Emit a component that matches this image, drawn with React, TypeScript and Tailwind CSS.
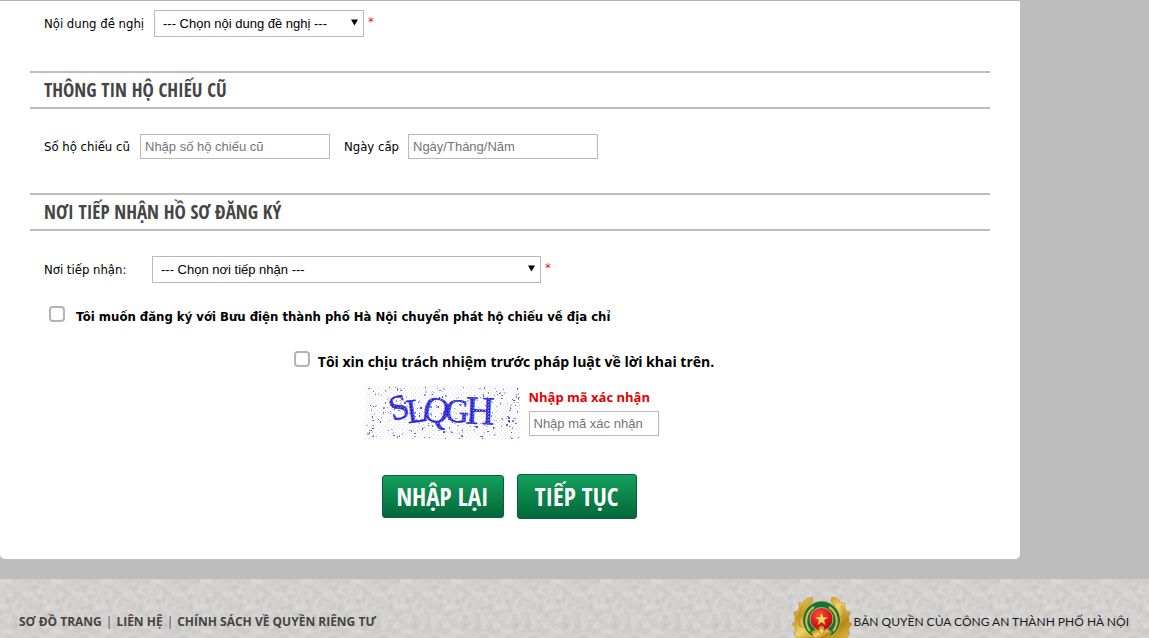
import React from "react";

const labelFont = "font-['DejaVu_Sans_Condensed','Noto_Sans',sans-serif] text-[13px]";
const fieldBox = "block border border-[#b9b9b9] bg-white font-['Liberation_Sans',sans-serif] text-[13px]";
const inputField = `${fieldBox} h-[25px] px-1 placeholder:text-[#757575]`;

function SectionTitle({ children }: { children: React.ReactNode }) {
  return (
    <h2 className="flex h-[38px] items-center border-y-2 border-[#bdbdbd] px-[14px] font-['Open_Sans_Condensed','Roboto_Condensed',sans-serif] text-[19px] font-bold text-[#454545]">
      {children}
    </h2>
  );
}

function SelectField({ id, text, width }: { id: string; text: string; width: string }) {
  return (
    <div className={`relative ${width}`}>
      <select id={id} className={`${fieldBox} h-[27px] w-full appearance-none pr-6 pl-2 text-black`}>
        <option>{text}</option>
      </select>
      <svg className="pointer-events-none absolute top-[9px] right-1.5 h-[7px] w-[7px]" viewBox="0 0 7 7" aria-hidden="true">
        <path d="M0 0.5H7L3.5 6.5Z" fill="#000" />
      </svg>
    </div>
  );
}

const checkbox =
  "h-4 w-4 shrink-0 appearance-none rounded-[4px] border-2 border-[#b3b3b3] bg-white checked:bg-[#0a8a4a]";

const specks = (() => {
  let seed = 4177;
  const next = () => {
    seed = (seed * 16807) % 2147483647;
    return seed / 2147483647;
  };
  return Array.from({ length: 300 }, () => ({
    x: Math.floor(next() * 153) + 1,
    y: Math.floor(next() * 52) + 1,
    w: next() > 0.65 ? 2 : 1,
    h: next() > 0.75 ? 2 : 1,
    o: 0.25 + next() * 0.6,
  }));
})();

const letters = [
  { c: "S", x: 34, y: 33, r: -16, s: 35 },
  { c: "L", x: 52, y: 36, r: -8, s: 34 },
  { c: "Q", x: 71, y: 36, r: 14, s: 36 },
  { c: "G", x: 92, y: 36, r: 4, s: 33 },
  { c: "H", x: 115, y: 38, r: 2, s: 40 },
];

function Captcha() {
  return (
    <svg width="155" height="54" viewBox="0 0 155 54" role="img" aria-label="SLQGH">
      <defs>
        <pattern id="screen" width="4" height="4" patternUnits="userSpaceOnUse">
          <rect width="4" height="4" fill="#fff" />
          <rect width="1" height="1" fill="#dcdcea" />
          <rect x="2" y="2" width="1" height="1" fill="#e2e2ee" />
        </pattern>
        <pattern id="ink" width="3" height="3" patternUnits="userSpaceOnUse">
          <rect width="3" height="3" fill="#2220d4" />
          <rect width="1" height="1" fill="#dddcf8" />
          <rect x="2" y="1" width="1" height="1" fill="#6866e2" />
        </pattern>
      </defs>
      <rect width="155" height="54" fill="url(#screen)" />
      {specks.map((d, i) => (
        <rect key={i} x={d.x} y={d.y} width={d.w} height={d.h} fill="#2c2bbf" opacity={d.o} />
      ))}
      <g fill="url(#ink)" className="font-['Liberation_Serif',serif]" stroke="#2220d4" strokeWidth="0.5" textAnchor="middle">
        {letters.map((l) => (
          <text key={l.c} x={l.x} y={l.y} fontSize={l.s} transform={`rotate(${l.r} ${l.x} ${l.y - 10})`}>
            {l.c}
          </text>
        ))}
      </g>
    </svg>
  );
}

function Emblem() {
  return (
    <svg className="h-[41px] w-[60px] shrink-0" viewBox="0 0 60 41" aria-hidden="true">
      <defs>
        <linearGradient id="gold" x1="0" y1="0" x2="1" y2="1">
          <stop offset="0" stopColor="#f3dc78" />
          <stop offset="0.3" stopColor="#c9971f" />
          <stop offset="0.5" stopColor="#f0d264" />
          <stop offset="0.75" stopColor="#b98516" />
          <stop offset="1" stopColor="#e6c04c" />
        </linearGradient>
        <radialGradient id="ruby" cx="0.4" cy="0.3" r="0.8">
          <stop offset="0" stopColor="#f4503c" />
          <stop offset="0.6" stopColor="#d5161b" />
          <stop offset="1" stopColor="#9c0b12" />
        </radialGradient>
      </defs>
      <path
        d="M20 0L21 4L17 9Q24 4 30 4Q36 4 43 9L39 4L40 0Q47 1 49 6L53 6Q52 10 54 14L58 15Q56 20 57 25L60 27Q57 30 56 34L58 36L55 41H5L2 36L4 34Q3 30 0 27L3 25Q4 20 2 15L6 14Q8 10 7 6L11 6Q13 1 20 0Z"
        fill="url(#gold)"
        stroke="#b98f2c"
        strokeWidth="0.6"
      />
      <path d="M11 8Q5 18 8 30M49 8Q55 18 52 30M8 17L12 22M52 17L48 22M7 27L11 31M53 27L49 31" fill="none" stroke="#b98a22" strokeWidth="0.8" />
      <circle cx="29.5" cy="23" r="19" fill="#dfc14d" />
      <circle cx="29.5" cy="23" r="18.5" fill="#11743c" />
      <path d="M22 10A16 16 0 0 0 18 34M37 10A16 16 0 0 1 41 34" fill="none" stroke="#d8b441" strokeWidth="2.2" />
      <circle cx="29.5" cy="22" r="11.5" fill="url(#ruby)" stroke="#b9cf6b" strokeWidth="0.8" />
      <path d="M29.5 15.5L31 20.2H36L32 23.2L33.5 28L29.5 25L25.5 28L27 23.2L23 20.2H28Z" fill="#f7d65a" />
      <path d="M19 35L24 32L27 34L27 30Q29.5 28 32 30L32 34L35 32L40 35L37 41H22Z" fill="url(#gold)" stroke="#9c7215" strokeWidth="0.5" />
      <circle cx="29.5" cy="34" r="2.5" fill="#f0d468" stroke="#a77a18" strokeWidth="0.6" />
    </svg>
  );
}

function StoneTexture() {
  return (
    <svg className="pointer-events-none absolute inset-0 h-full w-full" aria-hidden="true">
      <defs>
        <filter id="stone" x="0" y="0" width="100%" height="100%" colorInterpolationFilters="sRGB">
          <feTurbulence type="fractalNoise" baseFrequency="0.16" numOctaves="4" seed="8" />
          <feColorMatrix type="matrix" values="0.1 0.06 0 0 0.745  0.1 0.06 0 0 0.74  0.1 0.06 0 0 0.73  0 0 0 0 1" />
        </filter>
        <pattern id="stoneTile" width="50" height="50" patternUnits="userSpaceOnUse">
          <rect width="50" height="50" filter="url(#stone)" />
        </pattern>
      </defs>
      <rect width="100%" height="100%" fill="url(#stoneTile)" />
    </svg>
  );
}

const greenButton =
  "rounded-[3px] border border-[#07603a] bg-linear-to-b from-[#14a05c] to-[#04683a] text-center font-['Open_Sans_Condensed','Roboto_Condensed',sans-serif] text-[25px] leading-none font-bold text-white";

export default function App() {
  return (
    <div className="flex min-h-screen flex-col bg-[#bdbdbd] text-black">
      <main className="w-full max-w-[1020px] rounded-b-[5px] border-t border-[#b5b5b5] bg-white px-[30px] pt-[9px] pb-10">
        <form onSubmit={(e) => e.preventDefault()}>
          <div className="flex items-center px-[14px]">
            <label htmlFor="request" className={`w-[110px] ${labelFont}`}>Nội dung đề nghị</label>
            <SelectField id="request" text="--- Chọn nội dung đề nghị ---" width="w-[210px]" />
            <span className={`ml-1 pb-1 leading-5 text-[#e02020] ${labelFont}`}>*</span>
          </div>

          <div className="mt-[34px]">
            <SectionTitle>THÔNG TIN HỘ CHIẾU CŨ</SectionTitle>
          </div>
          <div className="mt-[25px] flex items-center px-[14px]">
            <label htmlFor="passport" className={`w-24 ${labelFont}`}>Số hộ chiếu cũ</label>
            <input id="passport" placeholder="Nhập số hộ chiếu cũ" className={`${inputField} w-[190px]`} />
            <label htmlFor="issued" className={`ml-[14px] w-16 ${labelFont}`}>Ngày cấp</label>
            <input id="issued" placeholder="Ngày/Tháng/Năm" className={`${inputField} w-[190px]`} />
          </div>

          <div className="mt-[34px]">
            <SectionTitle>NƠI TIẾP NHẬN HỒ SƠ ĐĂNG KÝ</SectionTitle>
          </div>
          <div className="mt-[25px] flex items-center px-[14px]">
            <label htmlFor="office" className={`w-[108px] ${labelFont}`}>Nơi tiếp nhận:</label>
            <SelectField id="office" text="--- Chọn nơi tiếp nhận ---" width="w-[389px]" />
            <span className={`ml-1 pb-1 leading-5 text-[#e02020] ${labelFont}`}>*</span>
          </div>

          <div className="mt-[23px] flex h-5 items-start gap-[11px] px-[19px]">
            <input id="post" type="checkbox" className={checkbox} />
            <label htmlFor="post" className={`leading-[22px] font-bold ${labelFont}`}>
              Tôi muốn đăng ký với Bưu điện thành phố Hà Nội chuyển phát hộ chiếu về địa chỉ
            </label>
          </div>

          <div className="mt-[25px] flex h-5 items-start justify-center gap-2 pr-3">
            <input id="oath" type="checkbox" className={checkbox} />
            <label htmlFor="oath" className="font-['Open_Sans',sans-serif] text-sm leading-[22px] font-bold">
              Tôi xin chịu trách nhiệm trước pháp luật về lời khai trên.
            </label>
          </div>

          <div className="mt-[15px] flex items-start justify-center gap-[9px] pl-1">
            <Captcha />
            <div className="flex w-[131px] flex-col">
              <label htmlFor="captcha" className="h-[25px] font-['Open_Sans',sans-serif] text-[13px] leading-[22px] font-bold text-[#e60000]">
                Nhập mã xác nhận
              </label>
              <input id="captcha" placeholder="Nhập mã xác nhận" className={`${inputField} w-[130px]`} />
            </div>
          </div>

          <div className="mt-[34px] flex items-center justify-center gap-[13px] pr-0.5">
            <button type="reset" className={`${greenButton} h-[43px] w-[122px]`}>NHẬP LẠI</button>
            <button type="submit" className={`${greenButton} h-[45px] w-[120px]`}>TIẾP TỤC</button>
          </div>
        </form>
      </main>

      <footer className="relative mt-5 flex-1 bg-[#d0cfcc]">
        <StoneTexture />
        <div className="relative flex items-start justify-between pt-[18px] pr-5 pl-[19px]">
          <nav className="flex items-center gap-1 pt-[14px] font-['Open_Sans',sans-serif] text-xs leading-[22px] font-bold text-[#454540]">
            <a href="#sitemap">SƠ ĐỒ TRANG</a>
            <span className="font-normal">|</span>
            <a href="#contact">LIÊN HỆ</a>
            <span className="font-normal">|</span>
            <a href="#privacy">CHÍNH SÁCH VỀ QUYỀN RIÊNG TƯ</a>
          </nav>
          <div className="flex items-start gap-0.5">
            <Emblem />
            <p className="pt-[14px] font-[Lato,sans-serif] text-xs leading-[22px] text-[#1c1c1c]">
              BẢN QUYỀN CỦA CÔNG AN THÀNH PHỐ HÀ NỘI
            </p>
          </div>
        </div>
      </footer>
    </div>
  );
}
